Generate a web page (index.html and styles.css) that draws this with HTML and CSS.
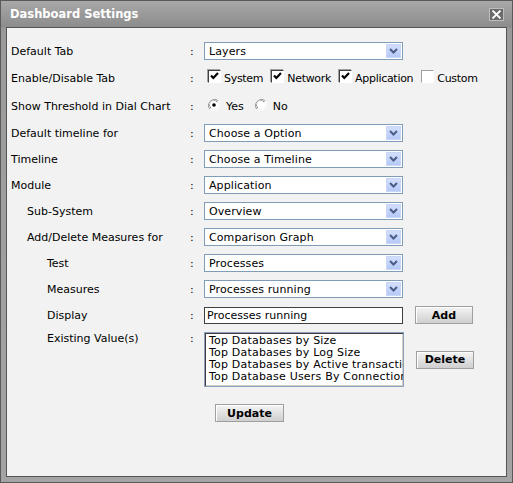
FILE: index.html
```html
<!DOCTYPE html>
<html>
<head>
<meta charset="utf-8">
<link rel="stylesheet" href="styles.css">
</head>
<body>
<div class="dialog">
  <div class="titlebar">
    <span class="title">Dashboard Settings</span>
    <span class="close"><svg width="11" height="9" viewBox="0 0 11 9"><path d="M1.5 0.5 L9.5 8.5 M9.5 0.5 L1.5 8.5" stroke="#fff" stroke-width="1.8" fill="none"/></svg></span>
  </div>
  <div class="content">
    <div class="row">
      <div class="label">Default Tab</div><div class="colon">:</div>
      <div class="select"><span class="val">Layers</span><span class="arrow"><svg width="9" height="6" viewBox="0 0 9 6"><path d="M1 1 L4.5 4.5 L8 1" stroke="#4a5d86" stroke-width="2" fill="none"/></svg></span></div>
    </div>
    <div class="row row-check">
      <div class="label">Enable/Disable Tab</div><div class="colon">:</div>
      <div class="checks">
        <span class="opt"><span class="cb"><svg width="9" height="9" viewBox="0 0 9 9"><path d="M1 3.5 L3.3 6 L8 1" stroke="#000" stroke-width="2.2" fill="none"/></svg></span>System</span>
        <span class="opt"><span class="cb"><svg width="9" height="9" viewBox="0 0 9 9"><path d="M1 3.5 L3.3 6 L8 1" stroke="#000" stroke-width="2.2" fill="none"/></svg></span>Network</span>
        <span class="opt"><span class="cb"><svg width="9" height="9" viewBox="0 0 9 9"><path d="M1 3.5 L3.3 6 L8 1" stroke="#000" stroke-width="2.2" fill="none"/></svg></span>Application</span>
        <span class="opt"><span class="cb off"></span>Custom</span>
      </div>
    </div>
    <div class="row row-radio">
      <div class="label">Show Threshold in Dial Chart</div><div class="colon">:</div>
      <div class="radios">
        <span class="ropt"><svg class="rb" width="12" height="12" viewBox="0 0 12 12"><path d="M10.2 1.8 A6 6 0 0 0 1.8 10.2" stroke="#9a9a9a" stroke-width="1" fill="none"/><path d="M9.2 2.8 A4.6 4.6 0 0 0 2.8 9.2" stroke="#404040" stroke-width="1" fill="none"/><circle cx="6" cy="6" r="4.2" fill="#fff"/><path d="M1.8 10.2 A6 6 0 0 0 10.2 1.8" stroke="#fff" stroke-width="1" fill="none"/><circle cx="6" cy="6" r="1.8" fill="#000"/></svg>Yes</span>
        <span class="ropt"><svg class="rb" width="12" height="12" viewBox="0 0 12 12"><path d="M10.2 1.8 A6 6 0 0 0 1.8 10.2" stroke="#9a9a9a" stroke-width="1" fill="none"/><path d="M9.2 2.8 A4.6 4.6 0 0 0 2.8 9.2" stroke="#404040" stroke-width="1" fill="none"/><circle cx="6" cy="6" r="4.2" fill="#fff"/><path d="M1.8 10.2 A6 6 0 0 0 10.2 1.8" stroke="#fff" stroke-width="1" fill="none"/></svg>No</span>
      </div>
    </div>
    <div class="row">
      <div class="label">Default timeline for</div><div class="colon">:</div>
      <div class="select"><span class="val">Choose a Option</span><span class="arrow"><svg width="9" height="6" viewBox="0 0 9 6"><path d="M1 1 L4.5 4.5 L8 1" stroke="#4a5d86" stroke-width="2" fill="none"/></svg></span></div>
    </div>
    <div class="row">
      <div class="label">Timeline</div><div class="colon">:</div>
      <div class="select"><span class="val">Choose a Timeline</span><span class="arrow"><svg width="9" height="6" viewBox="0 0 9 6"><path d="M1 1 L4.5 4.5 L8 1" stroke="#4a5d86" stroke-width="2" fill="none"/></svg></span></div>
    </div>
    <div class="row">
      <div class="label">Module</div><div class="colon">:</div>
      <div class="select"><span class="val">Application</span><span class="arrow"><svg width="9" height="6" viewBox="0 0 9 6"><path d="M1 1 L4.5 4.5 L8 1" stroke="#4a5d86" stroke-width="2" fill="none"/></svg></span></div>
    </div>
    <div class="row">
      <div class="label ind1">Sub-System</div><div class="colon">:</div>
      <div class="select"><span class="val">Overview</span><span class="arrow"><svg width="9" height="6" viewBox="0 0 9 6"><path d="M1 1 L4.5 4.5 L8 1" stroke="#4a5d86" stroke-width="2" fill="none"/></svg></span></div>
    </div>
    <div class="row">
      <div class="label ind1">Add/Delete Measures for</div><div class="colon">:</div>
      <div class="select"><span class="val">Comparison Graph</span><span class="arrow"><svg width="9" height="6" viewBox="0 0 9 6"><path d="M1 1 L4.5 4.5 L8 1" stroke="#4a5d86" stroke-width="2" fill="none"/></svg></span></div>
    </div>
    <div class="row">
      <div class="label ind2">Test</div><div class="colon">:</div>
      <div class="select"><span class="val">Processes</span><span class="arrow"><svg width="9" height="6" viewBox="0 0 9 6"><path d="M1 1 L4.5 4.5 L8 1" stroke="#4a5d86" stroke-width="2" fill="none"/></svg></span></div>
    </div>
    <div class="row">
      <div class="label ind2">Measures</div><div class="colon">:</div>
      <div class="select"><span class="val">Processes running</span><span class="arrow"><svg width="9" height="6" viewBox="0 0 9 6"><path d="M1 1 L4.5 4.5 L8 1" stroke="#4a5d86" stroke-width="2" fill="none"/></svg></span></div>
    </div>
    <div class="row">
      <div class="label ind2">Display</div><div class="colon">:</div>
      <div class="textbox">Processes running</div>
      <span class="btn btn-side">Add</span>
    </div>
    <div class="row row-list">
      <div class="label ind2">Existing Value(s)</div><div class="colon">:</div>
      <div class="listgroup">
        <div class="listbox">
          <div class="item">Top Databases by Size</div>
          <div class="item">Top Databases by Log Size</div>
          <div class="item">Top Databases by Active transactions</div>
          <div class="item">Top Database Users By Connections</div>
        </div>
        <span class="btn btn-side">Delete</span>
      </div>
    </div>
    <div class="row-update">
      <span class="btn btn-update">Update</span>
    </div>
  </div>
</div>
</body>
</html>
```
FILE: styles.css
```css
html, body {
  margin: 0;
  padding: 0;
  background: #8e8e8e;
}
.dialog {
  width: 513px;
  height: 483px;
  box-sizing: border-box;
  border: 1px solid #5a5a5a;
  background: linear-gradient(to bottom, #a8a8a8 0px, #8c8c8c 26px, #9a9a9a 27px, #a4a4a4 100%);
  padding: 0 5px 5px 5px;
  display: flex;
  flex-direction: column;
  font-family: "DejaVu Sans", Verdana, sans-serif;
  font-size: 11px;
  color: #000;
}
.titlebar {
  height: 25px;
  display: flex;
  align-items: center;
  justify-content: space-between;
  padding: 0 3px 1px 4px;
}
.title {
  color: #fff;
  font-weight: bold;
  font-size: 11.5px;
}
.close {
  width: 13px;
  height: 11px;
  background: #6b6b6b;
  border: 1px solid #bdbdbd;
  display: flex;
  align-items: center;
  justify-content: center;
  margin-top: 1px;
}
.content {
  flex: 1;
  background: #f2f2f2;
  border: 1px solid #555;
  padding: 10px 0 0 4px;
}
.row {
  display: flex;
  align-items: center;
  height: 26px;
}
.row-check { height: 28px; }
.row-radio { height: 28px; }
.label {
  width: 178px;
  white-space: nowrap;
}
.ind1 { padding-left: 16px; width: 162px; }
.ind2 { padding-left: 36px; width: 142px; }
.colon {
  width: 15px;
  padding-left: 1px;
  box-sizing: border-box;
}
.select {
  width: 199px;
  height: 18px;
  box-sizing: border-box;
  border: 1px solid #7f9db9;
  background: #fff;
  display: flex;
  align-items: center;
  justify-content: space-between;
  padding: 0 1px 0 4px;
  letter-spacing: 0.1px;
}
.arrow {
  width: 15px;
  height: 14px;
  box-sizing: border-box;
  background: linear-gradient(to bottom, #d2defc, #b6c9f7);
  border: 1px solid #c9d6f5;
  display: flex;
  align-items: center;
  justify-content: center;
}
.checks, .radios {
  display: flex;
  align-items: center;
  padding-left: 4px;
}
.checks {
  letter-spacing: -0.3px;
}
.opt {
  display: flex;
  align-items: center;
  margin-right: 8px;
}
.cb {
  width: 13px;
  height: 13px;
  box-sizing: border-box;
  border-top: 1px solid #404040;
  border-left: 1px solid #404040;
  border-right: 1px solid #fff;
  border-bottom: 1px solid #fff;
  box-shadow: -1px -1px 0 #a0a0a0;
  background: #fff;
  margin-right: 3px;
  margin-top: -3px;
  display: flex;
  align-items: center;
  justify-content: center;
}
.cb.off {
  border-top-color: #a0a0a0;
  border-left-color: #a0a0a0;
  box-shadow: none;
}
.ropt {
  display: flex;
  align-items: center;
  margin-right: 11px;
}
.rb {
  margin-right: 6px;
  margin-top: -3px;
}
.textbox {
  width: 199px;
  height: 17px;
  box-sizing: border-box;
  border: 1px solid #3f3f3f;
  background: #fff;
  padding: 0 2px;
  line-height: 15px;
  white-space: nowrap;
  overflow: hidden;
}
.btn {
  display: flex;
  align-items: center;
  justify-content: center;
  box-sizing: border-box;
  border: 1px solid #9f9f9f;
  box-shadow: inset 1px 1px 0 #fff;
  background: linear-gradient(to bottom, #f4f4f4, #cfcfcf);
  font-weight: bold;
  font-size: 11px;
  height: 18px;
}
.btn-side {
  width: 58px;
  margin-left: 12px;
}
.row-list {
  height: auto;
  align-items: flex-start;
  padding-top: 4px;
}
.row-list .label, .row-list .colon {
  line-height: 14px;
}
.listgroup {
  display: flex;
  align-items: center;
}
.listbox {
  width: 200px;
  height: 55px;
  box-sizing: border-box;
  border: 1px solid #8aa0bd;
  box-shadow: inset 1px 1px 0 #404040, inset -1px -1px 0 #d4d0c8;
  background: #fff;
  padding: 2px 2px 0 4px;
  overflow: hidden;
  letter-spacing: 0.2px;
}
.item {
  line-height: 12px;
  white-space: nowrap;
}
.row-update {
  display: flex;
  padding: 17px 0 0 204px;
}
.btn-update {
  width: 69px;
}
```
